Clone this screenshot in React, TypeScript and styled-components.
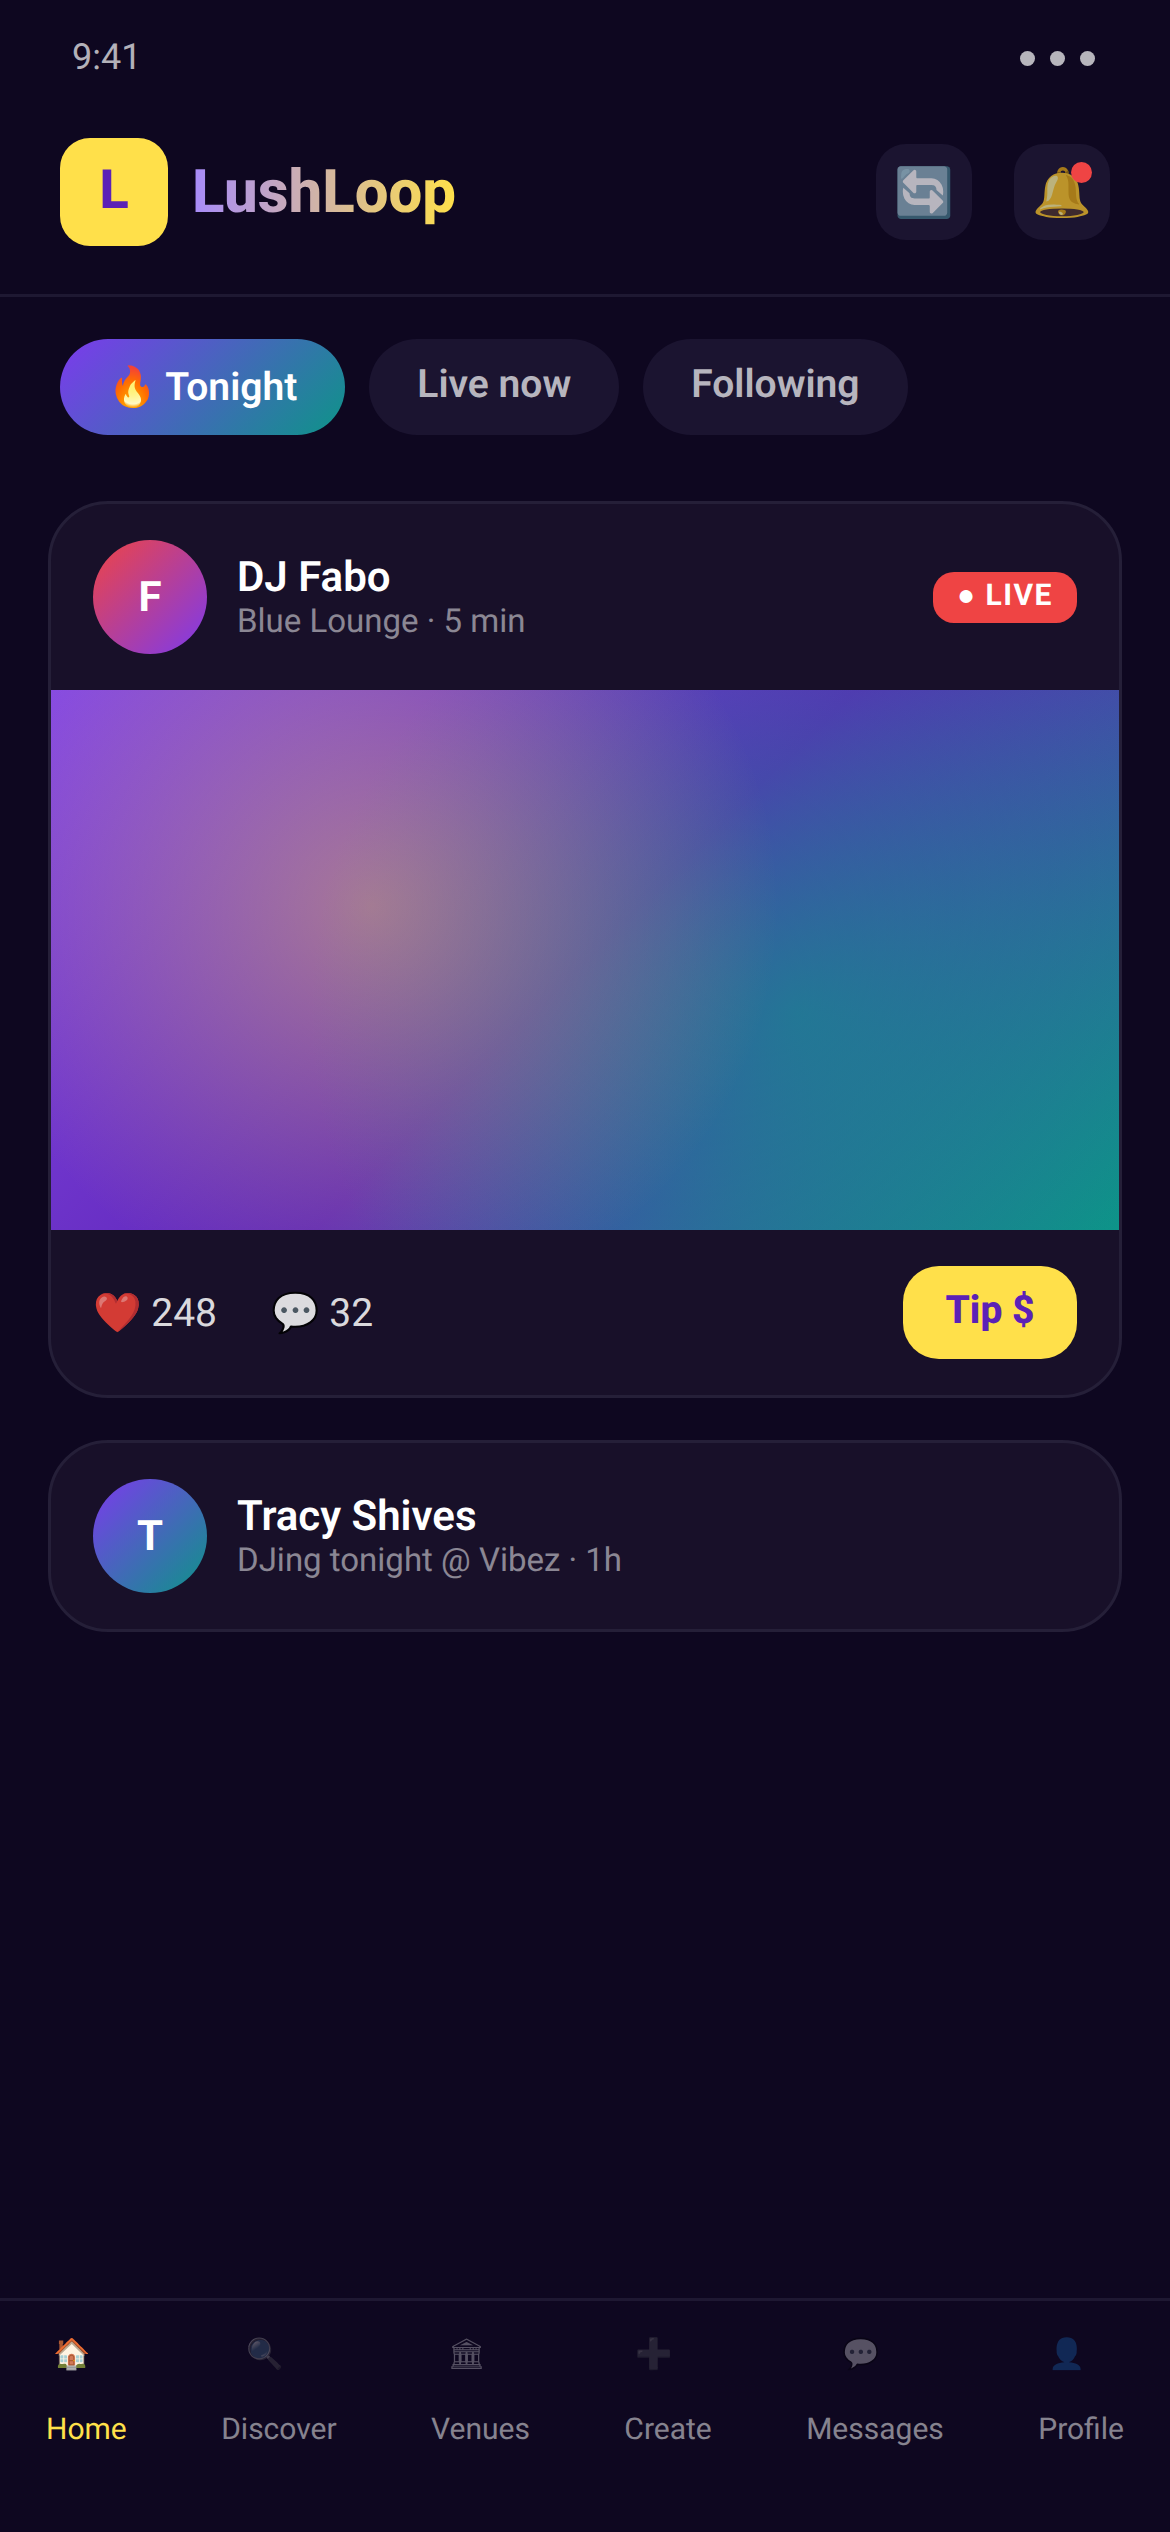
import React, { FC } from 'react'
import styled, { createGlobalStyle } from 'styled-components'

const GlobalStyle = createGlobalStyle`
    * {
        box-sizing: border-box;
    }

    html, body {
        margin: 0;
        padding: 0;
        background: #0e0720;
    }

    body {
        font-family: Roboto, sans-serif;
        text-rendering: geometricPrecision;
    }
`

const Screen = styled.div`
    width: 1170px;
    height: 2532px;
    display: flex;
    flex-direction: column;
    overflow: hidden;
    background: #0e0720;
    color: #fff;
`

const StatusBar = styled.div`
    height: 114px;
    padding: 36px 75px 0 72px;
    display: flex;
    justify-content: space-between;
    align-items: flex-start;
`

const Clock = styled.span`
    font-size: 36px;
    line-height: 42px;
    color: rgba(255, 255, 255, 0.7);
`

const Dots = styled.div`
    display: flex;
    gap: 15px;
    margin-top: 15px;

    i {
        display: block;
        width: 15px;
        height: 15px;
        border-radius: 50%;
        background: rgba(255, 255, 255, 0.7);
    }
`

const Header = styled.header`
    padding: 24px 60px 48px;
    display: flex;
    align-items: center;
    justify-content: space-between;
    border-bottom: 3px solid #1e1832;
`

const Brand = styled.div`
    display: flex;
    align-items: center;
    gap: 24px;
`

const LogoMark = styled.div`
    width: 108px;
    height: 108px;
    padding-bottom: 3px;
    border-radius: 30px;
    background: #ffe04a;
    color: #5b21b6;
    font-size: 54px;
    font-weight: 800;
    display: flex;
    align-items: center;
    justify-content: center;
`

const BrandName = styled.span`
    font-size: 60px;
    line-height: 66px;
    margin-bottom: 1px;
    font-weight: 800;
    background: linear-gradient(90deg, #a78bfa, #ffe04a);
    -webkit-background-clip: text;
    background-clip: text;
    color: transparent;
`

const HeaderActions = styled.div`
    display: flex;
    gap: 42px;
`

const IconButton = styled.div`
    position: relative;
    width: 96px;
    height: 96px;
    border-radius: 30px;
    background: #1b1430;
    font-size: 48px;
    display: flex;
    align-items: center;
    justify-content: center;
`

const Glyph = styled.span`
    opacity: 0.7;
`

const Badge = styled.span`
    position: absolute;
    top: 18px;
    right: 18px;
    width: 21px;
    height: 21px;
    border-radius: 50%;
    background: #ef4444;
`

const Tabs = styled.nav`
    padding: 42px 60px 66px;
    display: flex;
    gap: 24px;
`

const Tab = styled.div<{ $active?: boolean }>`
    height: 96px;
    padding: 0 48px ${p => (p.$active ? '0' : '6px')};
    border-radius: 48px;
    display: flex;
    align-items: center;
    font-size: 39px;
    font-weight: 600;
    white-space: nowrap;
    background: ${p => (p.$active ? 'linear-gradient(135deg, #7c3aed, #0d9488)' : '#1b1430')};
    color: ${p => (p.$active ? '#fff' : 'rgba(255, 255, 255, 0.7)')};
`

const Feed = styled.main`
    padding: 0 48px;
    display: flex;
    flex-direction: column;
    gap: 42px;
`

const Card = styled.article`
    border: 3px solid #251f38;
    border-radius: 60px;
    background: #181029;
    overflow: hidden;
`

const CardHead = styled.div`
    padding: 36px 42px;
    display: flex;
    align-items: center;
    gap: 30px;
`

const Avatar = styled.div<{ $from: string; $to: string }>`
    width: 114px;
    height: 114px;
    border-radius: 50%;
    flex: none;
    display: flex;
    align-items: center;
    justify-content: center;
    font-size: 42px;
    font-weight: 700;
    background: linear-gradient(135deg, ${p => p.$from}, ${p => p.$to});
`

const Who = styled.div`
    flex: 1;
    display: flex;
    flex-direction: column;
`

const Name = styled.div`
    font-size: 42px;
    line-height: 48px;
    font-weight: 600;
`

const Meta = styled.div`
    font-size: 33px;
    line-height: 39px;
    color: rgba(255, 255, 255, 0.5);
`

const LiveTag = styled.div`
    height: 51px;
    padding: 0 24px 3px;
    border-radius: 21px;
    background: #ef4444;
    font-size: 30px;
    font-weight: 700;
    letter-spacing: 1.5px;
    display: flex;
    align-items: center;
`

const Media = styled.div`
    height: 540px;
    background:
        radial-gradient(circle at 30% 40%, rgba(255, 224, 74, 0.4), transparent 50%),
        radial-gradient(circle at 70% 60%, rgba(13, 148, 136, 0.6), transparent 60%),
        linear-gradient(135deg, #8548e4, #5f27ba 50%, #0d9488);
`

const CardFoot = styled.div`
    padding: 36px 42px;
    display: flex;
    align-items: center;
    justify-content: space-between;
`

const Stats = styled.div`
    display: flex;
    gap: 54px;
`

const Stat = styled.span`
    font-size: 39px;
    color: rgba(255, 255, 255, 0.85);
`

const TipButton = styled.div`
    width: 174px;
    height: 93px;
    padding-bottom: 6px;
    border-radius: 36px;
    background: #ffe04a;
    color: #5b21b6;
    font-size: 39px;
    font-weight: 800;
    display: flex;
    align-items: center;
    justify-content: center;
`

const BottomNav = styled.footer`
    margin-top: auto;
    height: 234px;
    padding: 30px 46px 0;
    border-top: 3px solid #1e1832;
    display: flex;
    justify-content: space-between;
`

const NavItem = styled.div<{ $active?: boolean }>`
    display: flex;
    flex-direction: column;
    align-items: center;
    gap: 33px;
    font-size: 30px;
    color: ${p => (p.$active ? '#ffe04a' : 'rgba(255, 255, 255, 0.5)')};
`

const NavIcon = styled.span<{ $active?: boolean }>`
    font-size: 30px;
    line-height: 48px;
    padding-right: 28px;
    opacity: ${p => (p.$active ? 1 : 0.6)};
`

const tabs = ['🔥 Tonight', 'Live now', 'Following']

const navItems = [
    { icon: '🏠', label: 'Home' },
    { icon: '🔍', label: 'Discover' },
    { icon: '🏛', label: 'Venues' },
    { icon: '➕', label: 'Create' },
    { icon: '💬', label: 'Messages' },
    { icon: '👤', label: 'Profile' },
]

const App: FC = () => {
    return (
        <Screen>
            <GlobalStyle />
            <StatusBar>
                <Clock>9:41</Clock>
                <Dots>
                    <i />
                    <i />
                    <i />
                </Dots>
            </StatusBar>

            <Header>
                <Brand>
                    <LogoMark>L</LogoMark>
                    <BrandName>LushLoop</BrandName>
                </Brand>
                <HeaderActions>
                    <IconButton>
                        <Glyph>🔄</Glyph>
                    </IconButton>
                    <IconButton>
                        <Glyph>🔔</Glyph>
                        <Badge />
                    </IconButton>
                </HeaderActions>
            </Header>

            <Tabs>
                {tabs.map((tab, ind) => (
                    <Tab key={tab} $active={ind === 0}>{tab}</Tab>
                ))}
            </Tabs>

            <Feed>
                <Card>
                    <CardHead>
                        <Avatar $from="#ef4444" $to="#7c3aed">F</Avatar>
                        <Who>
                            <Name>DJ Fabo</Name>
                            <Meta>Blue Lounge · 5 min</Meta>
                        </Who>
                        <LiveTag>● LIVE</LiveTag>
                    </CardHead>
                    <Media />
                    <CardFoot>
                        <Stats>
                            <Stat>❤️ 248</Stat>
                            <Stat>💬 32</Stat>
                        </Stats>
                        <TipButton>Tip $</TipButton>
                    </CardFoot>
                </Card>

                <Card>
                    <CardHead>
                        <Avatar $from="#7c3aed" $to="#0d9488">T</Avatar>
                        <Who>
                            <Name>Tracy Shives</Name>
                            <Meta>DJing tonight @ Vibez · 1h</Meta>
                        </Who>
                    </CardHead>
                </Card>
            </Feed>

            <BottomNav>
                {navItems.map((item, ind) => (
                    <NavItem key={item.label} $active={ind === 0}>
                        <NavIcon $active={ind === 0}>{item.icon}</NavIcon>
                        {item.label}
                    </NavItem>
                ))}
            </BottomNav>
        </Screen>
    )
}

export default App
